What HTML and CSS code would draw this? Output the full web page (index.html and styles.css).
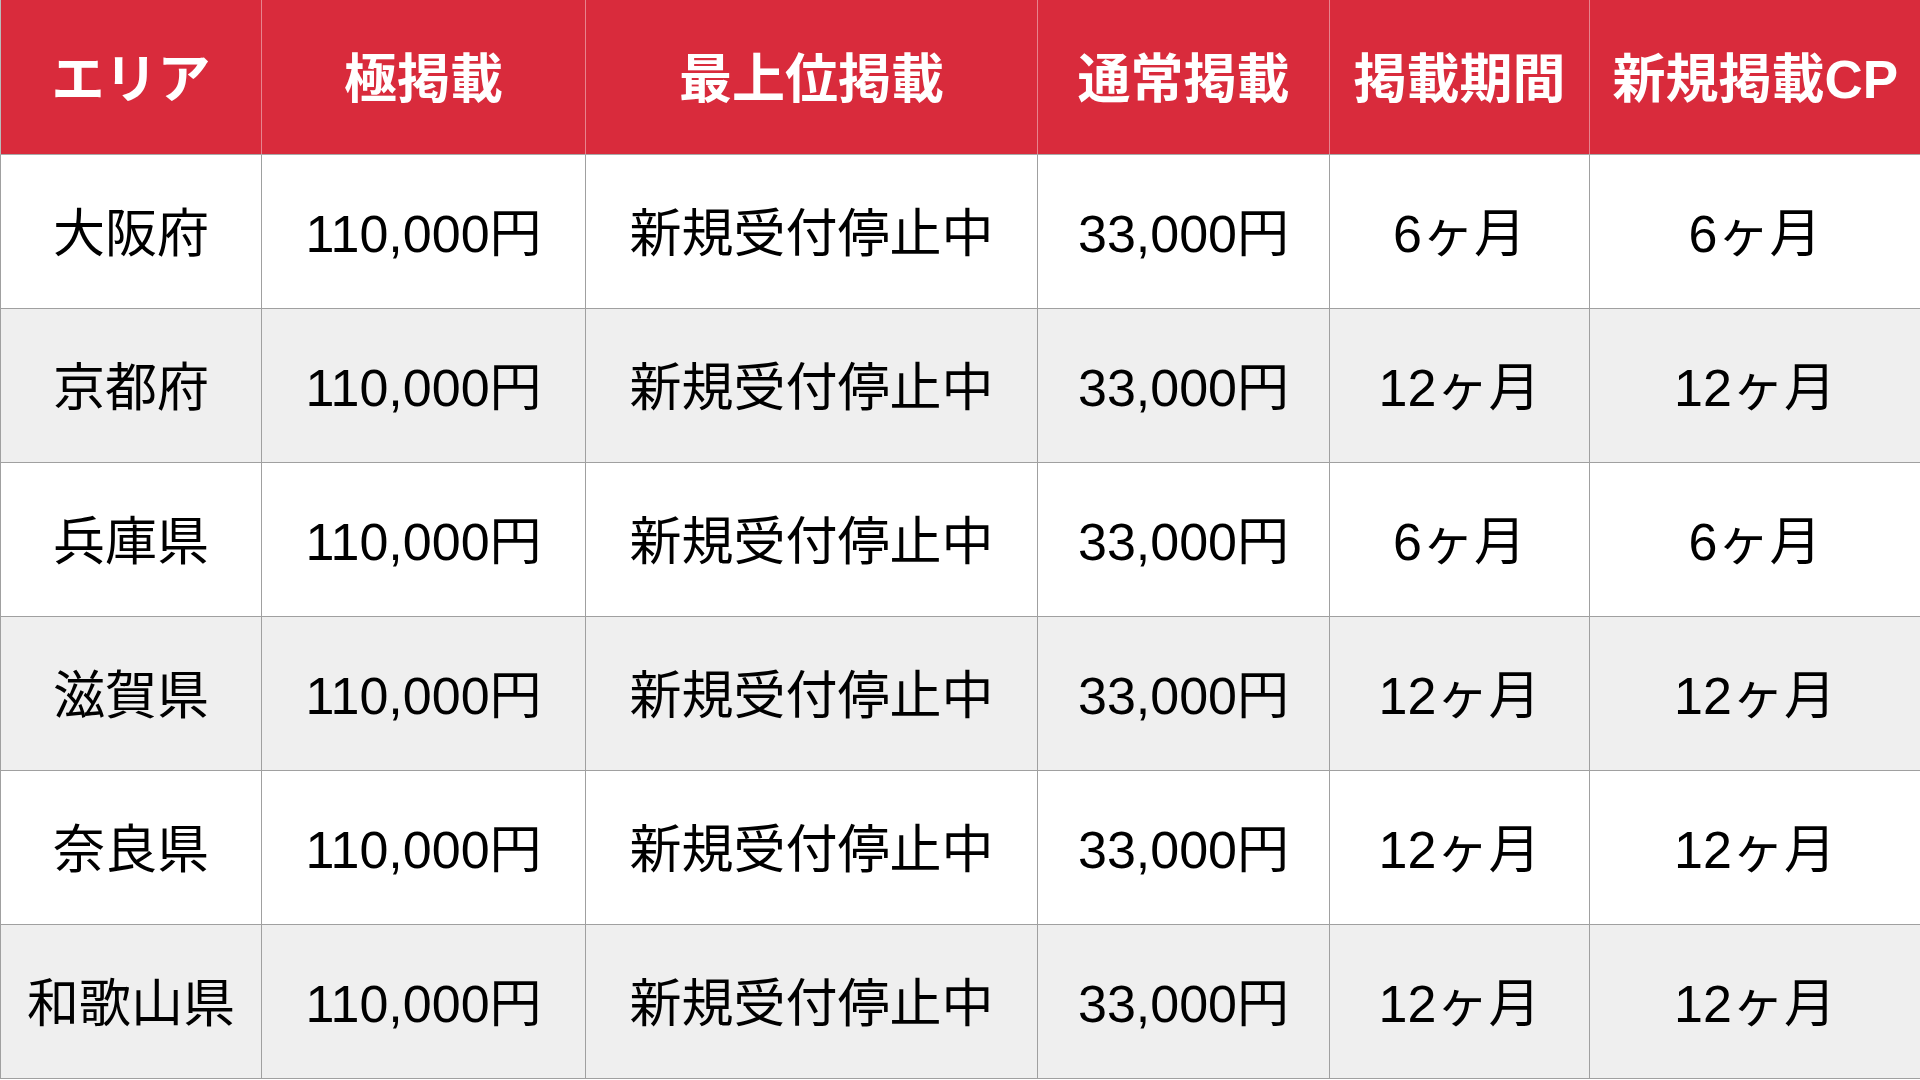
FILE: index.html
```html
<!DOCTYPE html>
<html lang="ja">
<head>
<meta charset="utf-8">
<title>掲載料金</title>
<link rel="stylesheet" href="styles.css">
</head>
<body>
<table class="price">
  <colgroup>
    <col class="c1"><col class="c2"><col class="c3"><col class="c4"><col class="c5"><col class="c6">
  </colgroup>
  <thead>
    <tr>
      <th>エリア</th><th>極掲載</th><th>最上位掲載</th><th>通常掲載</th><th>掲載期間</th><th>新規掲載CP</th>
    </tr>
  </thead>
  <tbody>
    <tr><td>大阪府</td><td>110,000円</td><td>新規受付停止中</td><td>33,000円</td><td>6ヶ月</td><td>6ヶ月</td></tr>
    <tr class="alt"><td>京都府</td><td>110,000円</td><td>新規受付停止中</td><td>33,000円</td><td>12ヶ月</td><td>12ヶ月</td></tr>
    <tr><td>兵庫県</td><td>110,000円</td><td>新規受付停止中</td><td>33,000円</td><td>6ヶ月</td><td>6ヶ月</td></tr>
    <tr class="alt"><td>滋賀県</td><td>110,000円</td><td>新規受付停止中</td><td>33,000円</td><td>12ヶ月</td><td>12ヶ月</td></tr>
    <tr><td>奈良県</td><td>110,000円</td><td>新規受付停止中</td><td>33,000円</td><td>12ヶ月</td><td>12ヶ月</td></tr>
    <tr class="alt"><td>和歌山県</td><td>110,000円</td><td>新規受付停止中</td><td>33,000円</td><td>12ヶ月</td><td>12ヶ月</td></tr>
  </tbody>
</table>
</body>
</html>
```
FILE: styles.css
```css
html, body {
  margin: 0;
  padding: 0;
  background: #ffffff;
}
body {
  font-family: "Liberation Sans", "Noto Sans CJK JP", sans-serif;
  color: #000000;
}
.price {
  width: 1920px;
  border-collapse: collapse;
  table-layout: fixed;
}
.c1 { width: 261px; }
.c2 { width: 324px; }
.c3 { width: 452px; }
.c4 { width: 292px; }
.c5 { width: 260px; }
.c6 { width: 331px; }
.price th,
.price td {
  height: 154px;
  padding: 0;
  text-align: center;
  vertical-align: middle;
  white-space: nowrap;
  box-sizing: border-box;
}
.price th {
  background: #d92b3c;
  color: #ffffff;
  font-size: 53px;
  font-weight: 700;
  padding-bottom: 4px;
  border-left: 1px solid #e7838d;
  border-bottom: 1px solid #a9a9a9;
}
.price th:first-child {
  border-left: 1px solid #b9b9b9;
}
.price td {
  font-size: 52px;
  font-weight: 400;
  padding-bottom: 4px;
  border: 1px solid #a0a0a0;
}
.price tr.alt td {
  background: #efefef;
}
```
